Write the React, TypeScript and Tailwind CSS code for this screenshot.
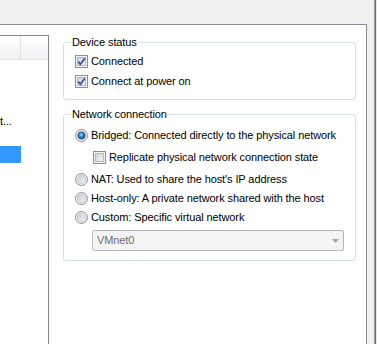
import React from "react";

function CheckBox({ checked }: { checked: boolean }) {
  return (
    <svg width="13" height="13" viewBox="0 0 13 13" className="shrink-0">
      <defs>
        <linearGradient id={checked ? "cbOn" : "cbOff"} x1="0" y1="0" x2="1" y2="1">
          <stop offset="0" stopColor="#cbd0d8" />
          <stop offset="1" stopColor="#f7f7f7" />
        </linearGradient>
      </defs>
      <rect x="0.5" y="0.5" width="12" height="12" fill="#f4f4f4" stroke="#8e8f8f" />
      <rect x="2.5" y="2.5" width="8" height="8" fill={`url(#${checked ? "cbOn" : "cbOff"})`} stroke="#b4b8be" />
      {checked && (
        <path d="M3.2 6.6 L5.4 9.2 L9.8 3.4" fill="none" stroke="#3d59a3" strokeWidth="1.8" />
      )}
    </svg>
  );
}

function Radio({ checked }: { checked: boolean }) {
  return (
    <svg width="13" height="13" viewBox="0 0 13 13" className="shrink-0">
      <defs>
        <linearGradient id="rdBg" x1="0" y1="0" x2="1" y2="1">
          <stop offset="0" stopColor="#c7cbd1" />
          <stop offset="1" stopColor="#f5f5f5" />
        </linearGradient>
        <radialGradient id="rdDot" cx="0.45" cy="0.4" r="0.6">
          <stop offset="0" stopColor="#9fe0ff" />
          <stop offset="0.45" stopColor="#2d8fd0" />
          <stop offset="1" stopColor="#1b4f82" />
        </radialGradient>
      </defs>
      <circle cx="6.5" cy="6.5" r="6" fill="#f2f2f2" stroke="#8e8f8f" />
      <circle cx="6.5" cy="6.5" r="4.2" fill="url(#rdBg)" stroke="#c2c5ca" strokeWidth="0.8" />
      {checked && <circle cx="6.5" cy="6.5" r="3.6" fill="url(#rdDot)" stroke="#1a3e6a" strokeWidth="0.6" />}
    </svg>
  );
}

export default function App() {
  return (
    <div className="w-[377px] h-[344px] bg-[#f0f0f0] flex overflow-hidden font-['Liberation_Sans',Arial,sans-serif] text-[11px] tracking-[-0.1px] text-black">
      <div className="w-[367px] flex flex-col">
        <div className="h-[24px] shrink-0" />
        <div className="flex-1 bg-white border-t border-r border-[#898c95] flex pt-[10px]">
          {/* hardware list, cut off at the left */}
          <div className="w-[49px] border-t border-r border-[#828790] flex flex-col">
            <div className="h-[24px] flex bg-gradient-to-b from-white to-[#f1f2f4] border-b border-[#e5e5e5]">
              <div className="w-[21px] border-r border-[#dfe3e8]" />
              <div className="flex-1" />
            </div>
            <div className="mt-[54px] h-[15px] leading-[15px] whitespace-nowrap">t...</div>
            <div className="mt-[17px] h-[17px] w-[21px] bg-[#3399ff]" />
          </div>

          <div className="ml-[14px] w-[293px] flex flex-col">
            <fieldset className="border border-[#d5dfe5] rounded-[3px] px-[7px] pb-[8px]">
              <legend className="px-[1px] leading-[15px]">Device status</legend>
              <div className="pt-[1px] flex flex-col pl-[4px]">
                <div className="h-[20px] flex items-center gap-[3px]">
                  <CheckBox checked />
                  <span>Connected</span>
                </div>
                <div className="h-[20px] flex items-center gap-[3px]">
                  <CheckBox checked />
                  <span>Connect at power on</span>
                </div>
              </div>
            </fieldset>

            <fieldset className="mt-[7px] border border-[#d5dfe5] rounded-[3px] px-[7px] pb-[9px]">
              <legend className="px-[1px] leading-[15px]">Network connection</legend>
              <div className="pt-[3px] flex flex-col">
                <div className="h-[20px] pl-[4px] flex items-center gap-[3px]">
                  <Radio checked />
                  <span>Bridged: Connected directly to the physical network</span>
                </div>
                <div className="mt-[2px] h-[20px] pl-[22px] flex items-center gap-[3px]">
                  <CheckBox checked={false} />
                  <span>Replicate physical network connection state</span>
                </div>
                <div className="mt-[3px] h-[19px] pl-[4px] flex items-center gap-[3px]">
                  <Radio checked={false} />
                  <span>NAT: Used to share the host's IP address</span>
                </div>
                <div className="h-[19px] pl-[4px] flex items-center gap-[3px]">
                  <Radio checked={false} />
                  <span>Host-only: A private network shared with the host</span>
                </div>
                <div className="h-[19px] pl-[4px] flex items-center gap-[3px]">
                  <Radio checked={false} />
                  <span>Custom: Specific virtual network</span>
                </div>
                <div className="mt-[3px] ml-[21px] w-[252px] h-[21px] border border-[#b3b8bd] rounded-[2px] bg-[#f4f4f4] flex items-center justify-between pl-[4px] pr-[4px]">
                  <span className="text-[#6d6d6d]">VMnet0</span>
                  <svg width="7" height="4" viewBox="0 0 7 4">
                    <path d="M0 0 H7 L3.5 4 Z" fill="#a3a3a3" />
                  </svg>
                </div>
              </div>
            </fieldset>
          </div>
        </div>
      </div>
      <div className="flex-1 flex">
        <div className="w-[7px] bg-[#f0f0f0]" />
        <div className="w-[1px] bg-[#9a9a9a]" />
        <div className="w-[1px] bg-[#6f6f6f]" />
        <div className="flex-1 bg-[#e9e9e9]" />
      </div>
    </div>
  );
}
